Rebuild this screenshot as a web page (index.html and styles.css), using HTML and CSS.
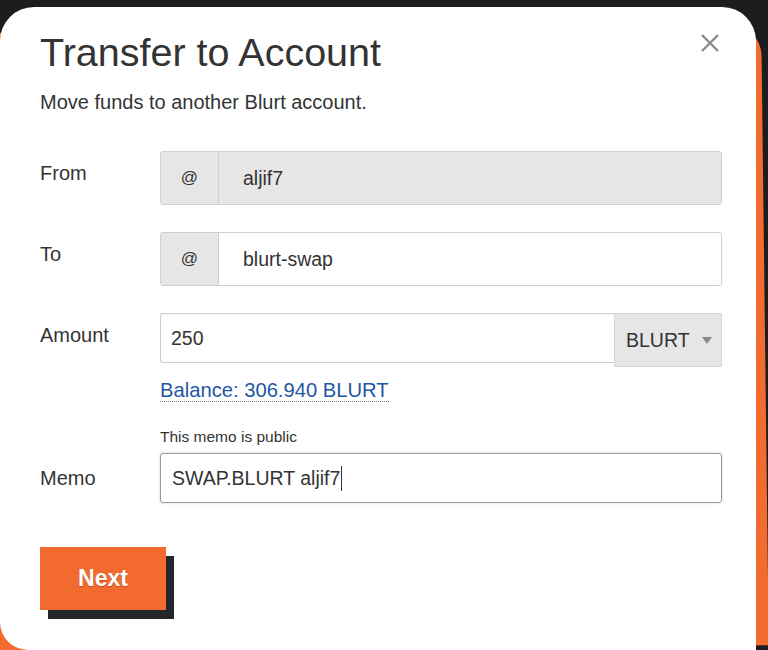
FILE: index.html
```html
<!DOCTYPE html>
<html lang="en">

<head>
	<meta charset="UTF-8">
	<meta name="viewport" content="width=device-width, initial-scale=1.0">
	<title>Transfer to Account</title>
	<link rel="stylesheet" href="styles.css">
</head>

<body>
	<div class="backdrop-card"></div>

	<div class="modal">
		<button class="close" type="button" aria-label="Close">
			<svg width="20" height="20" viewBox="0 0 20 20">
				<path d="M2 2 L18 18 M18 2 L2 18" stroke="#8a8a8a" stroke-width="2.4" fill="none" />
			</svg>
		</button>

		<h1>Transfer to Account</h1>
		<p class="subtitle">Move funds to another Blurt account.</p>

		<form class="transfer-form">
			<!-- From -->
			<label class="row-label row-from" for="from">From</label>
			<div class="input-group row-from">
				<span class="addon">@</span>
				<input type="text" id="from" value="aljif7" disabled>
			</div>

			<!-- To -->
			<label class="row-label row-to" for="to">To</label>
			<div class="input-group row-to">
				<span class="addon">@</span>
				<input type="text" id="to" value="blurt-swap">
			</div>

			<!-- Amount -->
			<label class="row-label row-amount" for="amount">Amount</label>
			<div class="amount-group row-amount">
				<input type="text" id="amount" value="250">
				<div class="asset-select">BLURT <span class="caret"></span></div>
			</div>
			<div class="balance"><a href="#">Balance: 306.940 BLURT</a></div>

			<!-- Memo -->
			<div class="memo-hint">This memo is public</div>
			<label class="row-label memo-label row-memo" for="memo">Memo</label>
			<div class="memo-field row-memo">SWAP.BLURT aljif7<span class="text-caret"></span></div>
		</form>

		<button class="next-btn" type="button">Next</button>
	</div>
</body>

</html>
```

FILE: styles.css
```css
body {
	margin: 0;
	padding: 0;
	height: 650px;
	overflow: hidden;
	background-color: #1d1d1f;
	font-family: "Liberation Sans", Arial, sans-serif;
	color: #333;
}

.backdrop-card {
	position: absolute;
	top: 27px;
	left: -20px;
	right: 3px;
	bottom: 0;
	background-color: #f26b2f;
	border-radius: 34px 34px 0 0;
	transform: rotate(-0.7deg);
}

.modal {
	position: absolute;
	top: 7px;
	left: 0;
	width: 756px;
	bottom: 0;
	box-sizing: border-box;
	padding: 21px 34px 0 40px;
	background-color: #fff;
	border-radius: 34px 34px 0 28px;
}

.close {
	position: absolute;
	top: 26px;
	right: 36px;
	padding: 0;
	border: none;
	background: none;
	cursor: pointer;
}

h1 {
	margin: 0;
	font-size: 39.5px;
	line-height: 48px;
	font-weight: normal;
	color: #333;
}

.subtitle {
	margin: 14px 0 0;
	font-size: 20px;
	line-height: 24px;
}

.transfer-form {
	display: grid;
	grid-template-columns: 120px 562px;
	margin-top: 37px;
}

.row-label {
	grid-column: 1;
	align-self: center;
	font-size: 20px;
	line-height: 24px;
	padding-bottom: 10px;
}

.memo-label {
	padding-bottom: 0;
	margin-top: 7px;
}

.row-from { grid-row: 1; }
.row-to { grid-row: 2; margin-top: 27px; }
.row-amount { grid-row: 3; margin-top: 27px; }
.row-memo { grid-row: 6; }

.input-group,
.amount-group,
.memo-field,
.balance,
.memo-hint {
	grid-column: 2;
}

.input-group {
	display: flex;
	height: 54px;
	box-sizing: border-box;
	border: 1px solid #cfcfcf;
	border-radius: 3px;
	overflow: hidden;
	box-shadow: inset 0 1px 2px rgba(0, 0, 0, 0.06);
}

.addon {
	width: 57px;
	flex: none;
	display: flex;
	align-items: center;
	justify-content: center;
	background-color: #e6e6e6;
	border-right: 1px solid #cfcfcf;
	font-size: 17px;
	color: #333;
}

.input-group input,
.amount-group input {
	flex: 1;
	min-width: 0;
	border: none;
	outline: none;
	background-color: #fff;
	padding: 0 0 0 24px;
	font-family: inherit;
	font-size: 19.5px;
	color: #333;
}

.input-group input:disabled {
	background-color: #e6e6e6;
	color: #333;
}

.amount-group {
	display: flex;
	align-items: flex-start;
}

.amount-group input {
	height: 50px;
	box-sizing: border-box;
	border: 1px solid #cfcfcf;
	border-right: none;
	border-radius: 3px 0 0 3px;
	padding-left: 10px;
	box-shadow: inset 0 1px 2px rgba(0, 0, 0, 0.06);
}

.asset-select {
	width: 108px;
	height: 54px;
	box-sizing: border-box;
	display: flex;
	align-items: center;
	padding-left: 11px;
	background-color: #e6e6e6;
	border: 1px solid #d8d8d8;
	font-size: 19.5px;
	color: #333;
}

.asset-select .caret {
	margin-left: 12px;
	border-left: 5px solid transparent;
	border-right: 5px solid transparent;
	border-top: 7px solid #8a8a8a;
}

.balance {
	grid-row: 4;
	margin-top: 11px;
	font-size: 20.2px;
	line-height: 24px;
}

.balance a {
	color: #1f56a3;
	text-decoration: none;
	border-bottom: 1px dotted #777;
}

.memo-hint {
	grid-row: 5;
	margin-top: 26px;
	font-size: 15.5px;
	line-height: 18px;
	color: #333;
}

.memo-field {
	margin-top: 7px;
	height: 50px;
	box-sizing: border-box;
	display: flex;
	align-items: center;
	padding-left: 11px;
	border: 1px solid #9a9a9a;
	border-radius: 3px;
	box-shadow: 0 0 3px rgba(0, 0, 0, 0.18);
	font-size: 19.5px;
	color: #333;
}

.text-caret {
	display: inline-block;
	width: 1px;
	height: 25px;
	margin-left: 1px;
	background-color: #333;
}

.next-btn {
	display: block;
	margin-top: 44px;
	width: 126px;
	height: 63px;
	border: none;
	background-color: #f36a2f;
	color: #fff;
	font-family: inherit;
	font-size: 23px;
	font-weight: bold;
	text-shadow: 0 1px 1px rgba(0, 0, 0, 0.25);
	box-shadow: 8px 9px 0 #23262b;
	cursor: pointer;
}
```
